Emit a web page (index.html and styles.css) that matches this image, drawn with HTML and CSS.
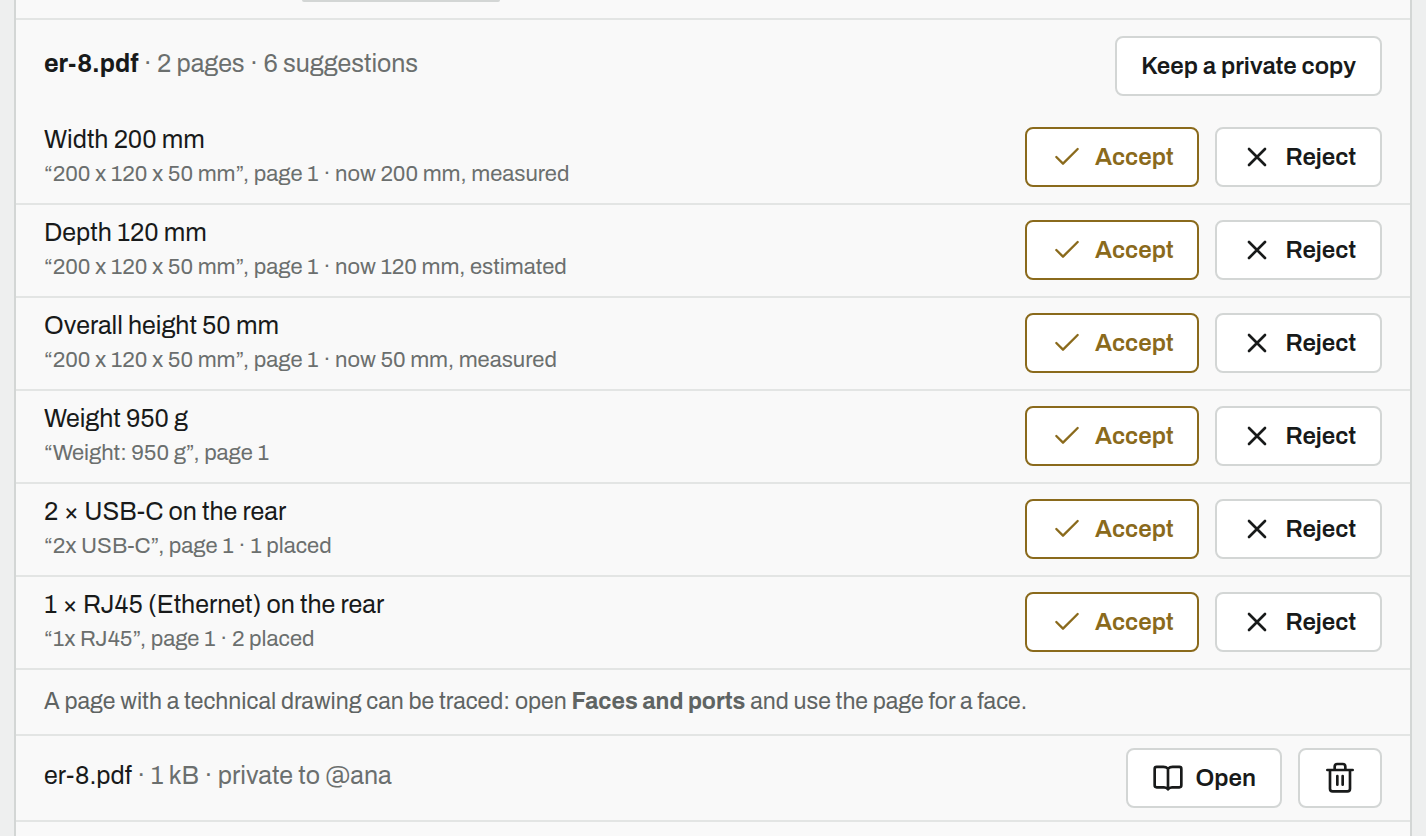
FILE: index.html
```html
<!DOCTYPE html>
<html lang="en">
<head>
    <meta charset="UTF-8">
    <meta name="viewport" content="width=device-width, initial-scale=1.0">
    <title>er-8.pdf</title>
    <link rel="stylesheet" href="styles.css">
</head>
<body>
    <svg class="sprite" aria-hidden="true">
        <symbol id="check" viewBox="0 0 24 24"><path d="M20 6 9 17l-5-5"/></symbol>
        <symbol id="cross" viewBox="0 0 24 24"><path d="M18 6 6 18M6 6l12 12"/></symbol>
        <symbol id="book" viewBox="0 0 24 24"><path d="M12 5v15.500M12 5c-1-.9-2-1.300-3.500-1.300H3.500A1.500 1.500 0 0 0 2 5.200v12.300A1.500 1.500 0 0 0 3.500 19h5.500c1.500 0 2.300.5 3 1.500.7-1 1.500-1.500 3-1.500h5.500a1.500 1.500 0 0 0 1.500-1.500V5.200a1.500 1.500 0 0 0-1.500-1.500h-5C14 3.700 13 4.100 12 5z"/></symbol>
        <symbol id="trash" viewBox="0 0 24 24"><path d="M2.500 6h19M19.500 6v14a2 2 0 0 1-2 2h-11a2 2 0 0 1-2-2V6M8 6V3.500a2 2 0 0 1 2-2h4a2 2 0 0 1 2 2V6M10 10.500v6.500M14 10.500v6.500"/></symbol>
    </svg>

    <main class="panel">
        <div class="upload"><span class="upload-box"></span></div>

        <section class="document">
            <header class="document-head">
                <p class="title name"><strong>er-8.pdf</strong> <span class="muted">· 2 pages · 6 suggestions</span></p>
                <button type="button">Keep a private copy</button>
            </header>

            <ul class="suggestions">
                <li class="row">
                    <div class="text">
                        <p class="title">Width 200 mm</p>
                        <p class="note">“200 x 120 x 50 mm”, page 1 · now 200 mm, measured</p>
                    </div>
                    <div class="actions">
                        <button type="button" class="accept"><svg class="icon"><use href="#check"/></svg>Accept</button>
                        <button type="button"><svg class="icon"><use href="#cross"/></svg>Reject</button>
                    </div>
                </li>
                <li class="row">
                    <div class="text">
                        <p class="title">Depth 120 mm</p>
                        <p class="note">“200 x 120 x 50 mm”, page 1 · now 120 mm, estimated</p>
                    </div>
                    <div class="actions">
                        <button type="button" class="accept"><svg class="icon"><use href="#check"/></svg>Accept</button>
                        <button type="button"><svg class="icon"><use href="#cross"/></svg>Reject</button>
                    </div>
                </li>
                <li class="row">
                    <div class="text">
                        <p class="title">Overall height 50 mm</p>
                        <p class="note">“200 x 120 x 50 mm”, page 1 · now 50 mm, measured</p>
                    </div>
                    <div class="actions">
                        <button type="button" class="accept"><svg class="icon"><use href="#check"/></svg>Accept</button>
                        <button type="button"><svg class="icon"><use href="#cross"/></svg>Reject</button>
                    </div>
                </li>
                <li class="row">
                    <div class="text">
                        <p class="title">Weight 950 g</p>
                        <p class="note">“Weight: 950 g”, page 1</p>
                    </div>
                    <div class="actions">
                        <button type="button" class="accept"><svg class="icon"><use href="#check"/></svg>Accept</button>
                        <button type="button"><svg class="icon"><use href="#cross"/></svg>Reject</button>
                    </div>
                </li>
                <li class="row">
                    <div class="text">
                        <p class="title">2 × USB-C on the rear</p>
                        <p class="note">“2x USB-C”, page 1 · 1 placed</p>
                    </div>
                    <div class="actions">
                        <button type="button" class="accept"><svg class="icon"><use href="#check"/></svg>Accept</button>
                        <button type="button"><svg class="icon"><use href="#cross"/></svg>Reject</button>
                    </div>
                </li>
                <li class="row">
                    <div class="text">
                        <p class="title">1 × RJ45 (Ethernet) on the rear</p>
                        <p class="note">“1x RJ45”, page 1 · 2 placed</p>
                    </div>
                    <div class="actions">
                        <button type="button" class="accept"><svg class="icon"><use href="#check"/></svg>Accept</button>
                        <button type="button"><svg class="icon"><use href="#cross"/></svg>Reject</button>
                    </div>
                </li>
            </ul>

            <p class="hint">A page with a technical drawing can be traced: open <strong>Faces and ports</strong> and use the page for a face.</p>
        </section>

        <section class="file">
            <p class="title name">er-8.pdf <span class="muted">· 1 kB · private to @ana</span></p>
            <div class="actions">
                <button type="button"><svg class="icon"><use href="#book"/></svg>Open</button>
                <button type="button" aria-label="Delete"><svg class="icon"><use href="#trash"/></svg></button>
            </div>
        </section>
    </main>
</body>
</html>
```
FILE: styles.css
```css
* {
    margin: 0;
    padding: 0;
    box-sizing: border-box;
}

body {
    display: flex;
    min-height: 100vh;
    padding: 0 14px;
    background: #eeefef;
    color: #181a1a;
    font-family: Archivo, "Liberation Sans", Arial, sans-serif;
}

.sprite {
    display: none;
}

.panel {
    flex: 1;
    background: #f9f9f9;
    border: solid #d3d6d5;
    border-width: 0 2px;
}

.upload {
    display: flex;
    padding: 0 286px 16px;
    border-bottom: 2px solid #e3e5e4;
}

.upload-box {
    width: 198px;
    height: 2px;
    background: #d3d6d5;
    border-radius: 0 0 4px 4px;
}

.document-head {
    display: flex;
    justify-content: space-between;
    align-items: center;
    padding: 16px 28px;
}

.title {
    font-size: 25px;
    line-height: 34px;
}

.name {
    padding-bottom: 4px;
}

.muted {
    color: #6b6f6e;
}

.note {
    color: #6b6f6e;
    font-size: 22px;
    line-height: 34px;
}

.suggestions {
    list-style: none;
}

.row {
    display: flex;
    justify-content: space-between;
    align-items: center;
    padding: 11px 28px 12px;
    border-bottom: 2px solid #e3e5e4;
}

.actions {
    display: flex;
    gap: 16px;
}

button {
    display: flex;
    align-items: center;
    justify-content: center;
    gap: 12px;
    height: 60px;
    padding: 0 24px;
    border: 2px solid #d3d6d5;
    border-radius: 8px;
    background: #fff;
    color: #181a1a;
    font: 600 24px/32px Archivo, "Liberation Sans", Arial, sans-serif;
    cursor: pointer;
}

button:hover {
    background: #f4f5f5;
}

.accept {
    border-color: #8a6a1c;
    color: #8a6a1c;
}

.icon {
    width: 32px;
    height: 32px;
    fill: none;
    stroke: currentColor;
    stroke-width: 2;
    stroke-linecap: round;
    stroke-linejoin: round;
}

.accept .icon {
    stroke-width: 1.75;
}

.hint {
    padding: 16px 28px;
    border-bottom: 2px solid #e3e5e4;
    color: #5f6463;
    font-size: 23px;
    line-height: 32px;
}

.file {
    display: flex;
    justify-content: space-between;
    align-items: center;
    padding: 12px 28px;
    border-bottom: 2px solid #e3e5e4;
}
```
